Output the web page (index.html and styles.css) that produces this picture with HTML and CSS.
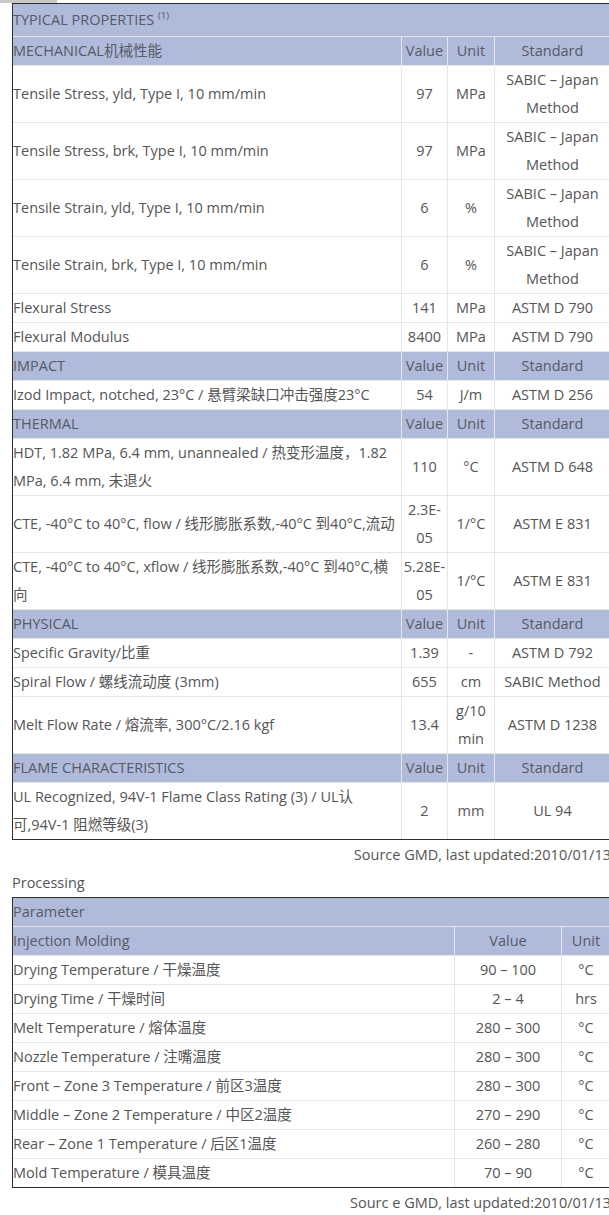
FILE: index.html
```html
<!DOCTYPE html>
<html lang="zh-CN">
<head>
<meta charset="utf-8">
<title>Typical Properties</title>
<link rel="stylesheet" href="styles.css">
</head>
<body>
<div class="tab"></div>
<div class="wrap">
  <table class="grid props">
    <colgroup>
      <col class="c-label"><col class="c-val"><col class="c-unit"><col class="c-std">
    </colgroup>
    <tr class="title"><th colspan="4">TYPICAL PROPERTIES <sup>(1)</sup></th></tr>
    <tr class="sec"><th>MECHANICAL机械性能</th><th class="ctr">Value</th><th class="ctr">Unit</th><th class="ctr">Standard</th></tr>
    <tr><td>Tensile Stress, yld, Type I, 10 mm/min</td><td class="ctr">97</td><td class="ctr">MPa</td><td class="ctr">SABIC – Japan Method</td></tr>
    <tr><td>Tensile Stress, brk, Type I, 10 mm/min</td><td class="ctr">97</td><td class="ctr">MPa</td><td class="ctr">SABIC – Japan Method</td></tr>
    <tr><td>Tensile Strain, yld, Type I, 10 mm/min</td><td class="ctr">6</td><td class="ctr">%</td><td class="ctr">SABIC – Japan Method</td></tr>
    <tr><td>Tensile Strain, brk, Type I, 10 mm/min</td><td class="ctr">6</td><td class="ctr">%</td><td class="ctr">SABIC – Japan Method</td></tr>
    <tr><td>Flexural Stress</td><td class="ctr">141</td><td class="ctr">MPa</td><td class="ctr">ASTM D 790</td></tr>
    <tr><td>Flexural Modulus</td><td class="ctr">8400</td><td class="ctr">MPa</td><td class="ctr">ASTM D 790</td></tr>
    <tr class="sec"><th>IMPACT</th><th class="ctr">Value</th><th class="ctr">Unit</th><th class="ctr">Standard</th></tr>
    <tr><td>Izod Impact, notched, 23°C / 悬臂梁缺口冲击强度23°C</td><td class="ctr">54</td><td class="ctr">J/m</td><td class="ctr">ASTM D 256</td></tr>
    <tr class="sec"><th>THERMAL</th><th class="ctr">Value</th><th class="ctr">Unit</th><th class="ctr">Standard</th></tr>
    <tr><td>HDT, 1.82 MPa, 6.4 mm, unannealed / 热变形温度，1.82 MPa, 6.4 mm, 未退火</td><td class="ctr">110</td><td class="ctr">°C</td><td class="ctr">ASTM D 648</td></tr>
    <tr><td>CTE, -40°C to 40°C, flow / 线形膨胀系数,-40°C 到40°C,流动</td><td class="ctr">2.3E-05</td><td class="ctr">1/°C</td><td class="ctr">ASTM E 831</td></tr>
    <tr><td>CTE, -40°C to 40°C, xflow / 线形膨胀系数,-40°C 到40°C,横向</td><td class="ctr">5.28E-05</td><td class="ctr">1/°C</td><td class="ctr">ASTM E 831</td></tr>
    <tr class="sec"><th>PHYSICAL</th><th class="ctr">Value</th><th class="ctr">Unit</th><th class="ctr">Standard</th></tr>
    <tr><td>Specific Gravity/比重</td><td class="ctr">1.39</td><td class="ctr">-</td><td class="ctr">ASTM D 792</td></tr>
    <tr><td>Spiral Flow / 螺线流动度 (3mm)</td><td class="ctr">655</td><td class="ctr">cm</td><td class="ctr">SABIC Method</td></tr>
    <tr><td>Melt Flow Rate / 熔流率, 300°C/2.16 kgf</td><td class="ctr">13.4</td><td class="ctr">g/10 min</td><td class="ctr">ASTM D 1238</td></tr>
    <tr class="sec"><th>FLAME CHARACTERISTICS</th><th class="ctr">Value</th><th class="ctr">Unit</th><th class="ctr">Standard</th></tr>
    <tr><td>UL Recognized, 94V-1 Flame Class Rating (3) / UL认可,94V-1 阻燃等级(3)</td><td class="ctr">2</td><td class="ctr">mm</td><td class="ctr">UL 94</td></tr>
  </table>
  <div class="source">Source GMD, last updated:2010/01/13</div>
  <div class="heading">Processing</div>
  <table class="grid proc">
    <colgroup>
      <col class="p-label"><col class="p-val"><col class="p-unit">
    </colgroup>
    <tr class="sec"><th colspan="3">Parameter</th></tr>
    <tr class="sec"><th>Injection Molding</th><th class="ctr">Value</th><th class="ctr">Unit</th></tr>
    <tr><td>Drying Temperature / 干燥温度</td><td class="ctr">90 – 100</td><td class="ctr">°C</td></tr>
    <tr><td>Drying Time / 干燥时间</td><td class="ctr">2 – 4</td><td class="ctr">hrs</td></tr>
    <tr><td>Melt Temperature / 熔体温度</td><td class="ctr">280 – 300</td><td class="ctr">°C</td></tr>
    <tr><td>Nozzle Temperature / 注嘴温度</td><td class="ctr">280 – 300</td><td class="ctr">°C</td></tr>
    <tr><td>Front – Zone 3 Temperature / 前区3温度</td><td class="ctr">280 – 300</td><td class="ctr">°C</td></tr>
    <tr><td>Middle – Zone 2 Temperature / 中区2温度</td><td class="ctr">270 – 290</td><td class="ctr">°C</td></tr>
    <tr><td>Rear – Zone 1 Temperature / 后区1温度</td><td class="ctr">260 – 280</td><td class="ctr">°C</td></tr>
    <tr><td>Mold Temperature / 模具温度</td><td class="ctr">70 – 90</td><td class="ctr">°C</td></tr>
  </table>
  <div class="source">Sourc e GMD, last updated:2010/01/13</div>
</div>
</body>
</html>
```
FILE: styles.css
```css
html {
  overflow: hidden;
}
body {
  margin: 0;
  font-family: "Open Sans", "Noto Sans CJK SC", sans-serif;
  font-size: 14.5px;
  color: #555555;
  background: #ffffff;
}
.tab {
  width: 57px;
  height: 3px;
  background: #c9c9c9;
}
.wrap {
  margin-left: 12px;
  width: 599px;
}
.grid {
  width: 100%;
  table-layout: fixed;
  border-collapse: separate;
  border-spacing: 0;
  border: 1px solid #2e2e2e;
}
.grid td,
.grid th {
  padding: 0;
  line-height: 28px;
  font-weight: normal;
  text-align: left;
  vertical-align: middle;
  border-bottom: 1px solid #e6e6e6;
  border-left: 1px solid #e6e6e6;
}
.grid td:first-child,
.grid th:first-child {
  border-left: 0;
}
.grid tr:last-child td {
  border-bottom: 0;
}
.grid th {
  background: #b0bada;
  color: #555a66;
}
.grid .ctr {
  text-align: center;
}
.title th {
  line-height: 32px;
}
.title sup {
  font-size: 9.5px;
  line-height: 0;
  vertical-align: 6px;
}
.c-val { width: 46px; }
.c-unit { width: 47px; }
.c-std { width: 116px; }
.p-val { width: 107px; }
.p-unit { width: 49px; }
.source {
  padding-top: 1px;
  line-height: 28px;
  text-align: right;
}
.heading {
  line-height: 28px;
}
```
